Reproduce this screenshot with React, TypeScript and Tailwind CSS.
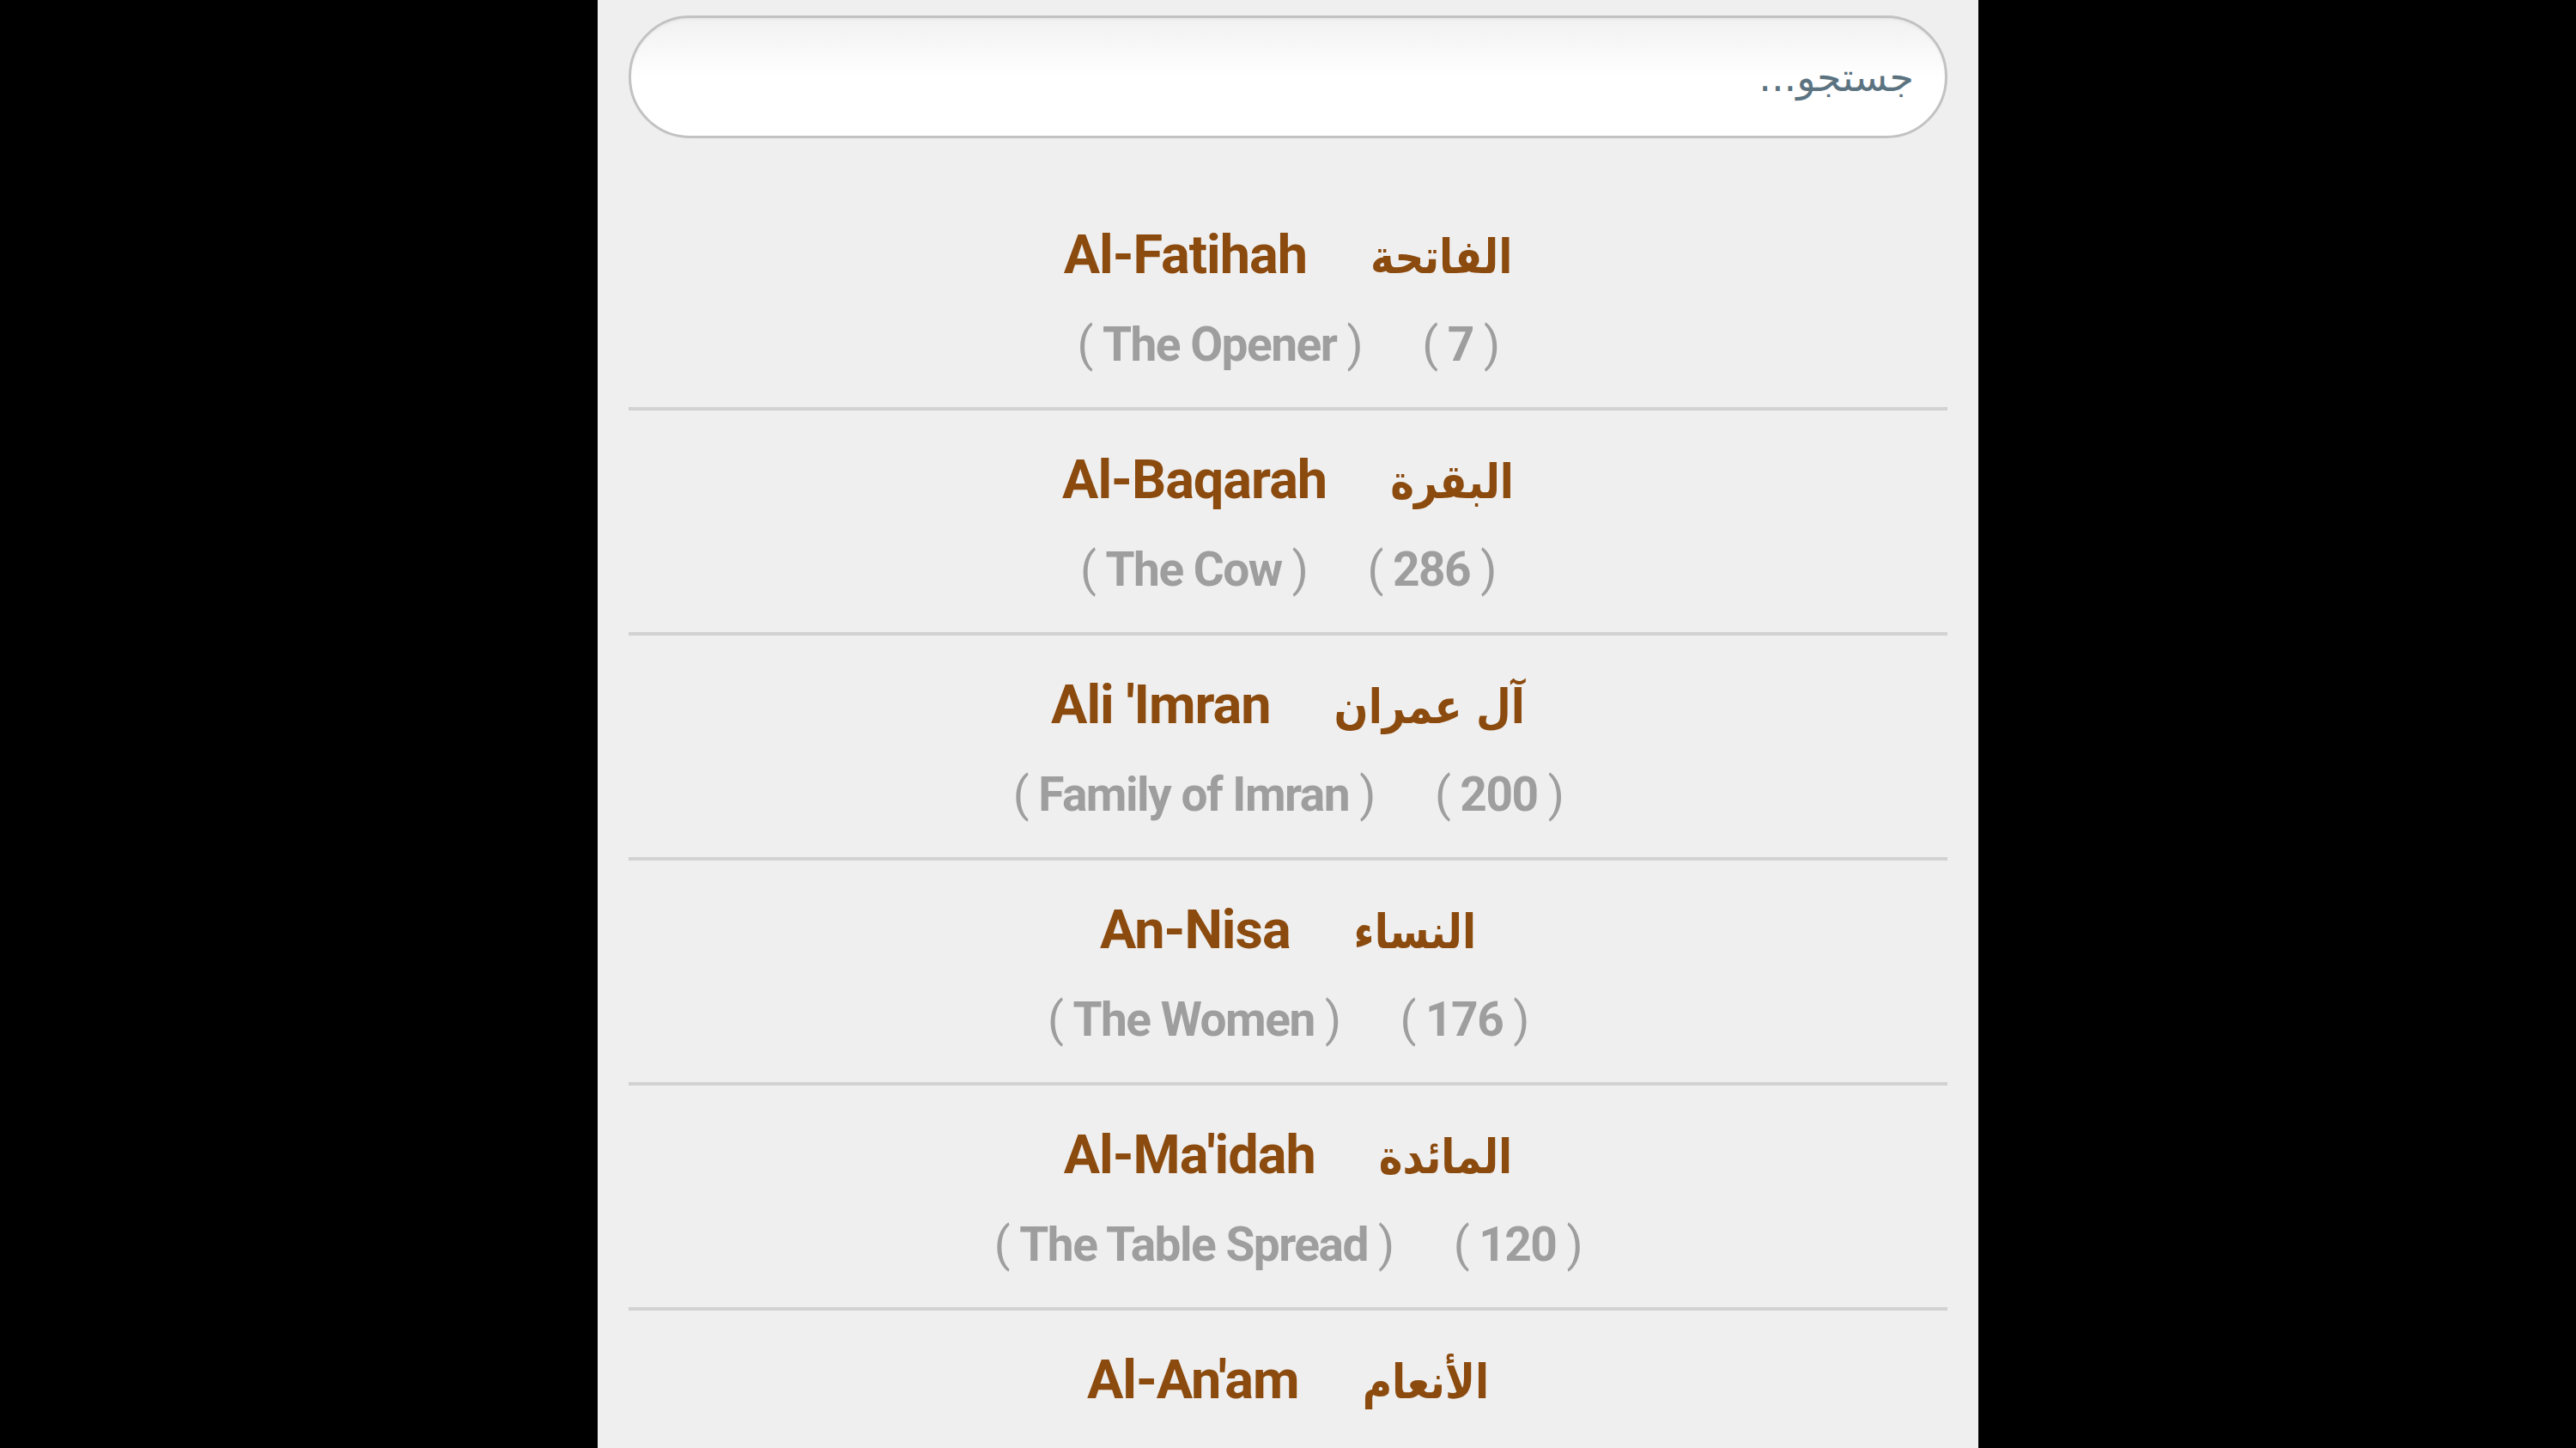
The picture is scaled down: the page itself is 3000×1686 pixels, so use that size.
import React from "react";

const surahs = [
  { en: "Al-Fatihah", ar: "الفاتحة", meaning: "The Opener", count: 7 },
  { en: "Al-Baqarah", ar: "البقرة", meaning: "The Cow", count: 286 },
  { en: "Ali 'Imran", ar: "آل عمران", meaning: "Family of Imran", count: 200 },
  { en: "An-Nisa", ar: "النساء", meaning: "The Women", count: 176 },
  { en: "Al-Ma'idah", ar: "المائدة", meaning: "The Table Spread", count: 120 },
  { en: "Al-An'am", ar: "الأنعام", meaning: "", count: 0 },
];

function Paren({ children }: { children: React.ReactNode }) {
  return (
    <span className="whitespace-pre">
      <span className="font-normal">{"( "}</span>
      <span className="font-bold">{children}</span>
      <span className="font-normal">{" )"}</span>
    </span>
  );
}

export default function App() {
  return (
    <div className="h-[1686px] w-[3000px] overflow-hidden bg-black flex justify-center">
      <div className="w-[1608px] h-full overflow-hidden bg-[#efefef] px-[36px] pt-[18px] font-['Roboto','Liberation_Sans',sans-serif]">
        <div
          dir="rtl"
          className="h-[143px] rounded-full border-[3px] border-[#c2c2c2] bg-gradient-to-b from-[#f1f1f1] via-white to-white flex items-center pr-[36px] shadow-[inset_0_2px_3px_rgba(0,0,0,0.04)]"
        >
          <span className="text-[46px] text-[#5b7380] font-['DejaVu_Sans',sans-serif] mt-[2px]">
            جستجو...
          </span>
        </div>
        <div className="mt-[55px]">
          {surahs.map((s) => (
            <div key={s.en} className="border-b-[4px] border-[#d2d2d2] pt-[41px] pb-[37px]">
              <div className="flex justify-center items-center gap-[74px] h-[80px]">
                <span className="text-[63px] leading-[80px] font-bold tracking-[-1px] text-[#8b4a0e]">
                  {s.en}
                </span>
                <span
                  dir="rtl"
                  className="inline-block text-[47px] leading-[80px] font-bold text-[#8b4a0e] font-['DejaVu_Sans',sans-serif] mt-[4px] scale-y-[1.17]"
                >
                  {s.ar}
                </span>
              </div>
              {s.meaning ? (
                <div className="mt-[28px] flex justify-center items-center gap-[70px] h-[72px] text-[55px] leading-[72px] tracking-[-1.5px] text-[#9e9e9e]">
                  <Paren>{s.meaning}</Paren>
                  <Paren>{s.count}</Paren>
                </div>
              ) : (
                <div className="mt-[28px] h-[72px]" />
              )}
            </div>
          ))}
        </div>
      </div>
    </div>
  );
}
